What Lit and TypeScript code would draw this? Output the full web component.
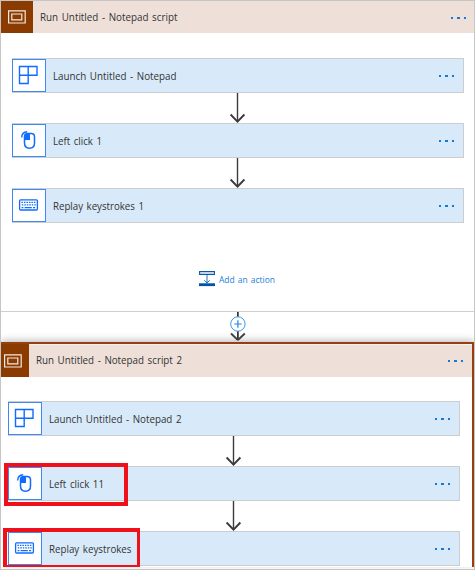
import { LitElement, html, css, svg } from "lit";
import { customElement, property } from "lit/decorators.js";
import { styleMap } from "lit/directives/style-map.js";
import { classMap } from "lit/directives/class-map.js";

type IconName = "launch" | "mouse" | "keyboard" | "scope" | "add";

const glyphs = {
  launch: svg`<path d="M7.5 7.5H25V16.2H7.5ZM7.5 16.2V24.5H16.2V7.5" fill="none" stroke="#0f6cff" stroke-width="1.4"/>`,
  mouse: svg`<path d="M12.5 15V12.8Q12.5 9.5 15.8 9.5H19.2Q22.5 9.5 22.5 12.8V19Q22.5 24.2 17.5 24.2Q12.5 24.2 12.5 19Z" fill="none" stroke="#0f6cff" stroke-width="1.5"/><path d="M12.4 15.9V12.6Q12.4 9.4 15.6 9.4H18V15.9Z" fill="#0f6cff"/><path d="M9.7 13.4Q9.8 8 15.2 7.7" fill="none" stroke="#0f6cff" stroke-width="1.4"/>`,
  keyboard: svg`<rect x="7.6" y="10.8" width="17.8" height="10.2" rx="1" fill="none" stroke="#0f6cff" stroke-width="1.3"/><path d="M9.4 13.4H23.8M9.8 15.9H23.8" fill="none" stroke="#0f6cff" stroke-width="1.4" stroke-dasharray="1.5 1"/><path d="M9.6 18.6H11.4M12.6 18.6H19.8M21 18.6H23.2" stroke="#0f6cff" stroke-width="1.3"/>`,
  scope: svg`<path d="M7.6 9.8H24.2V22H7.6Z" fill="none" stroke="#f6e9e2" stroke-width="1.2"/><path d="M10.8 13H20.8V18.8H10.8Z" fill="none" stroke="#f6e9e2" stroke-width="1.2"/>`,
  add: svg`<path d="M0.6 0.6H15.4V3.4H0.6Z" fill="#fff" stroke="#0b57a8" stroke-width="1.1"/><path d="M8 4V11.6M5.2 9.3L8 12L10.8 9.3" fill="none" stroke="#2a6fb8" stroke-width="1"/><rect y="12.3" width="16" height="2.8" fill="#0053a6"/>`,
};

@customElement("flow-icon")
class FlowIcon extends LitElement {
  static styles = css`
    :host { display: block; }
    svg { display: block; }
  `;
  @property() name: IconName = "launch";
  render() {
    const [w, h] = this.name === "add" ? [16, 16] : [32, 32];
    return html`<svg width=${w} height=${h} viewBox="0 0 ${w} ${h}">${glyphs[this.name]}</svg>`;
  }
}

/** One line of text set to a fixed width. */
@customElement("flow-label")
class FlowLabel extends LitElement {
  static styles = css`
    :host { display: block; }
    svg { display: block; overflow: visible; }
    text { fill: currentColor; font-size: 11.4px; word-spacing: 1.2px; }
    .small { font-size: 9.8px; word-spacing: 1px; }
  `;
  @property() text = "";
  @property({ type: Number }) width = 100;
  @property({ type: Boolean }) small = false;
  render() {
    return html`<svg width=${this.width} height="16">
      <text class=${classMap({ small: this.small })} x="0" y="12" textLength=${this.width} lengthAdjust="spacingAndGlyphs">${this.text}</text>
    </svg>`;
  }
}

@customElement("flow-dots")
class FlowDots extends LitElement {
  static styles = css`
    :host { display: flex; gap: 4.1px; }
    i { width: 2.3px; height: 2px; background: #1679d8; }
  `;
  render() {
    return html`<i></i><i></i><i></i>`;
  }
}

@customElement("flow-arrow")
class FlowArrow extends LitElement {
  static styles = css`
    :host { display: flex; justify-content: center; height: 30px; }
    svg { display: block; }
  `;
  render() {
    return html`<svg width="18" height="30" viewBox="0 0 18 30" fill="none" stroke="#3b3b3b">
      <path d="M8.5 0V28" stroke-width="1.4" />
      <path d="M1.6 21.5L8.5 28.6L15.4 21.5" stroke-width="1.9" />
    </svg>`;
  }
}

@customElement("flow-card")
class FlowCard extends LitElement {
  static styles = css`
    :host { display: block; }
    .card {
      display: flex; align-items: center; box-sizing: border-box; height: 35px;
      background: #d8eaf9; border: 1px solid #cbcdcf; border-left: 0; position: relative;
    }
    .tile {
      box-sizing: border-box; width: 34px; height: 33px; border: 1px solid #3d88f5;
      background: #fff; flex: none;
    }
    .tile flow-icon { margin: -1px 0 0 -1px; }
    flow-label { margin: 1px 0 0 7px; }
    flow-dots { margin: 1px 9px 0 auto; }
    .mark {
      position: absolute; box-sizing: border-box; border: 4px solid #ee111b;
      left: -4px; top: -4px; height: 43px; z-index: 1;
    }
    .mark.low { left: -5px; height: 39px; border-bottom-width: 2px; border-right-width: 3px; }
  `;
  @property() icon: IconName = "launch";
  @property() label = "";
  @property({ type: Number }) span = 0;
  @property({ type: Number }) mark = 0;
  @property({ type: Boolean }) low = false;
  render() {
    return html`<div class="card">
      <div class="tile"><flow-icon name=${this.icon}></flow-icon></div>
      <flow-label text=${this.label} width=${this.span}></flow-label>
      <flow-dots></flow-dots>
      ${this.mark
        ? html`<div class=${classMap({ mark: true, low: this.low })} style=${styleMap({ width: `${this.mark}px` })}></div>`
        : null}
    </div>`;
  }
}

@customElement("app-root")
class AppRoot extends LitElement {
  static styles = css`
    :host {
      display: block; box-sizing: border-box; width: 475px; height: 570px; overflow: hidden;
      border: 1px solid #c6c6c6; background: #fff; color: #333;
      font: 12px/16px "Open Sans", "Noto Sans", sans-serif;
    }
    .head { display: flex; align-items: center; height: 32px; background: #eee0d9; }
    .badge { width: 32px; height: 32px; background: #8b3a00; overflow: hidden; flex: none; }
    .head flow-label { margin: 0 0 0 7px; }
    .head flow-dots { margin: 1px 8px 0 auto; }
    .first { height: 310px; border-bottom: 1px solid #cfcfcf; }
    .first .steps { padding: 25px 10px 0 11px; }
    .add {
      display: flex; justify-content: center; gap: 4px; align-items: center; margin: 48px 1.6px 0 0;
      color: #1b7fd6;
    }
    .link { display: flex; justify-content: center; height: 30px; }
    .link svg { display: block; overflow: visible; }
    .second {
      box-sizing: border-box; width: 473px; height: 225px; position: relative;
      border-top: 2px solid #963f10; border-right: 2px solid #963f10;
      box-shadow: 0 -2px 7px rgba(0, 0, 0, 0.24); overflow: hidden; background: #fff;
    }
    .second .head { border-top: 1px solid #f8f1ed; }
    .second .badge { width: 28px; height: 33px; margin-top: -1px; }
    .second .badge flow-icon { margin: 1px 0 0 -4px; }
    .second .head flow-label { margin-bottom: 2px; }
    .second .head flow-dots { margin: 0 9px 1px auto; }
    .second .steps { padding: 24px 12px 0 7px; }
  `;
  render() {
    return html`
      <section class="first">
        <div class="head">
          <div class="badge"><flow-icon name="scope"></flow-icon></div>
          <flow-label text="Run Untitled - Notepad script" width="137.5"></flow-label>
          <flow-dots></flow-dots>
        </div>
        <div class="steps">
          <flow-card icon="launch" label="Launch Untitled - Notepad" span="123.5"></flow-card>
          <flow-arrow></flow-arrow>
          <flow-card icon="mouse" label="Left click 1" span="49"></flow-card>
          <flow-arrow></flow-arrow>
          <flow-card icon="keyboard" label="Replay keystrokes 1" span="91"></flow-card>
        </div>
        <div class="add">
          <flow-icon name="add"></flow-icon>
          <flow-label text="Add an action" width="56" small></flow-label>
        </div>
      </section>
      <div class="link">
        <svg width="18" height="30" viewBox="0 0 18 30" fill="none">
          <path d="M8.9 0V28" stroke="#222" stroke-width="1.6" />
          <path d="M2 21.5L8.4 27.6H9.4L15.8 21.5" stroke="#444" stroke-width="2" />
          <circle cx="8.9" cy="12" r="7.2" fill="#fff" stroke="#3d98e3" />
          <path d="M5.2 12H12.6M8.9 8.3V15.7" stroke="#2387dc" stroke-width="1.2" />
        </svg>
      </div>
      <section class="second">
        <div class="head">
          <div class="badge"><flow-icon name="scope"></flow-icon></div>
          <flow-label text="Run Untitled - Notepad script 2" width="146"></flow-label>
          <flow-dots></flow-dots>
        </div>
        <div class="steps">
          <flow-card icon="launch" label="Launch Untitled - Notepad 2" span="132.5"></flow-card>
          <flow-arrow></flow-arrow>
          <flow-card icon="mouse" label="Left click 11" span="55" mark="124"></flow-card>
          <flow-arrow></flow-arrow>
          <flow-card icon="keyboard" label="Replay keystrokes" span="82.5" mark="137" low></flow-card>
        </div>
      </section>
    `;
  }
}
